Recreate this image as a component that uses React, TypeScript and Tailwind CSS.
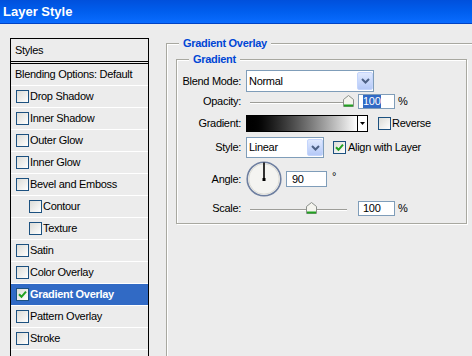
import React from "react";

type StyleItem = { label: string; sub?: boolean; checked?: boolean; active?: boolean };

const styleItems: StyleItem[] = [
  { label: "Drop Shadow" },
  { label: "Inner Shadow" },
  { label: "Outer Glow" },
  { label: "Inner Glow" },
  { label: "Bevel and Emboss" },
  { label: "Contour", sub: true },
  { label: "Texture", sub: true },
  { label: "Satin" },
  { label: "Color Overlay" },
  { label: "Gradient Overlay", checked: true, active: true },
  { label: "Pattern Overlay" },
  { label: "Stroke" },
];

const Checkbox = ({ checked }: { checked?: boolean }) => (
  <span className="flex h-[13px] w-[13px] shrink-0 items-center justify-center border border-[#1c5180] bg-linear-to-br from-[#dcdcd7] to-white">
    {checked && (
      <svg width="9" height="9" viewBox="0 0 9 9">
        <path d="M1 4.2 L3.5 6.8 L8 1.6" fill="none" stroke="#21a121" strokeWidth="2" />
      </svg>
    )}
  </span>
);

const Chevron = () => (
  <span className="my-[1px] flex w-[16px] shrink-0 items-center justify-center rounded-[2px] border border-[#c4d5fc] bg-linear-to-b from-[#e0e9fe] to-[#b5c9f7]">
    <svg width="9" height="6" viewBox="0 0 9 6">
      <path d="M1 1 L4.5 4.5 L8 1" fill="none" stroke="#4d6185" strokeWidth="2" />
    </svg>
  </span>
);

const Select = ({ value, width }: { value: string; width: string }) => (
  <div className={`flex h-full ${width} border border-[#7f9db9] bg-white`}>
    <span className="flex flex-1 items-center pl-[2px]">{value}</span>
    <Chevron />
  </div>
);

const Thumb = () => (
  <svg width="11" height="12" viewBox="0 0 11 12">
    <path d="M0.5 4.5 L5.5 0.5 L10.5 4.5 V11.5 H0.5 Z" fill="#f4f4ee" stroke="#8a8f8a" />
    <rect x="1" y="9.5" width="9" height="2" fill="#21a121" />
  </svg>
);

// thumb position is passed as a full class name
const Slider = ({ thumb }: { thumb: string }) => (
  <div className="relative h-full w-[107px] shrink-0">
    <div className="absolute top-1/2 right-[6px] left-[4px] h-[2px] border-t border-[#9d9d98] border-b border-b-white" />
    <div className={`absolute top-[1px] ${thumb}`}>
      <Thumb />
    </div>
  </div>
);

const Field = ({ children, width }: { children: React.ReactNode; width: string }) => (
  <div className={`flex h-full ${width} shrink-0 items-center border border-[#7f9db9] bg-white pl-[4px]`}>{children}</div>
);

const Row = ({ label, className, children }: { label: string; className: string; children: React.ReactNode }) => (
  <div className={`flex items-center gap-[5px] ${className}`}>
    <span className="w-[64px] shrink-0 text-right">{label}</span>
    {children}
  </div>
);

const App = () => {
  return (
    <div className="flex h-[356px] w-[472px] flex-col overflow-hidden bg-[#ececec] font-['Liberation_Sans',Arial,sans-serif] text-[11px] leading-[13px] tracking-[-0.3px] text-black">
      <div className="flex h-[24px] shrink-0 items-center border-b border-[#0042c4] bg-linear-to-b from-[#0050dc] via-[#005eee] to-[#0a6cff] pl-[3px]">
        <span className="text-[13px] font-bold tracking-normal text-white">Layer Style</span>
      </div>

      <div className="flex flex-1">
        {/* styles list */}
        <div className="mt-[14px] ml-[10px] flex h-[340px] w-[139px] shrink-0 flex-col border border-black">
          <div className="flex h-[23px] items-center border-b border-black pl-[4px]">Styles</div>
          <div className="h-[1px]" />
          <div className="flex h-[23px] items-center border-t border-b border-t-black border-b-white pl-[4px]">
            Blending Options: Default
          </div>
          {styleItems.map((item) => (
            <div
              key={item.label}
              className={`flex h-[22px] items-center gap-[1px] border-b border-white ${item.sub ? "pl-[18px]" : "pl-[5px]"} ${
                item.active ? "bg-[#316ac5] font-bold text-white" : ""
              }`}
            >
              <Checkbox checked={item.checked} />
              <span>{item.label}</span>
            </div>
          ))}
        </div>

        {/* Gradient Overlay group */}
        <fieldset className="mt-[13px] ml-[17px] h-[340px] w-[330px] shrink-0 border border-[#a8a8a0] pl-[9px] shadow-[inset_1px_1px_0_#fff,1px_1px_0_#fff]">
          <legend className="ml-[3px] bg-[#ececec] px-[4px] font-bold text-[#0046d5]">Gradient Overlay</legend>

          <fieldset className="mt-[3px] w-[291px] border border-[#a8a8a0] pb-[7px] shadow-[inset_1px_1px_0_#fff,1px_1px_0_#fff]">
            <legend className="ml-[12px] bg-[#ececec] px-[4px] font-bold text-[#0046d5]">Gradient</legend>

            <Row label="Blend Mode:" className="mt-[4px] h-[22px]">
              <Select value="Normal" width="w-[128px]" />
            </Row>

            <Row label="Opacity:" className="mt-[2px] h-[15px]">
              <Slider thumb="left-[97px]" />
              <Field width="w-[37px]">
                <span className="bg-[#316ac5] pr-[1px] text-white">100</span>
              </Field>
              <span className="-ml-[2px]">%</span>
            </Row>

            <Row label="Gradient:" className="mt-[6px] h-[17px]">
              <div className="flex h-full w-[122px] shrink-0 border border-black">
                <div className="flex-1 bg-linear-to-r from-black to-white" />
                <div className="flex w-[10px] items-center justify-center border-l border-black bg-white">
                  <svg width="5" height="3" viewBox="0 0 5 3">
                    <path d="M0 0 H5 L2.5 3 Z" fill="#000" />
                  </svg>
                </div>
              </div>
              <div className="ml-[5px] flex items-center gap-[1px]">
                <Checkbox />
                <span>Reverse</span>
              </div>
            </Row>

            <Row label="Style:" className="mt-[5px] h-[21px]">
              <Select value="Linear" width="w-[78px]" />
              <div className="ml-[4px] flex items-center gap-[2px]">
                <Checkbox checked />
                <span>Align with Layer</span>
              </div>
            </Row>

            <Row label="Angle:" className="mt-[3px] h-[36px]">
              <svg width="36" height="36" viewBox="0 0 36 36" className="shrink-0">
                <circle cx="18" cy="18" r="16.8" fill="#f4f4f1" stroke="#6e7fa0" strokeWidth="1.6" />
                <circle cx="18" cy="18" r="15.2" fill="none" stroke="#dcdcd6" strokeWidth="1" />
                <line x1="18" y1="18" x2="18" y2="1.5" stroke="#000" strokeWidth="1.6" />
                <rect x="16.5" y="17" width="3" height="3" fill="#000" />
              </svg>
              <div className="ml-[-1px] h-[16px]">
                <Field width="w-[41px]">
                  <span className="pl-[1px]">90</span>
                </Field>
              </div>
              <span className="-mt-[6px]">°</span>
            </Row>

            <Row label="Scale:" className="mt-[4px] h-[15px]">
              <Slider thumb="left-[60px]" />
              <Field width="w-[37px]">
                <span>100</span>
              </Field>
              <span className="-ml-[2px]">%</span>
            </Row>
          </fieldset>
        </fieldset>
      </div>
    </div>
  );
};

export default App;
